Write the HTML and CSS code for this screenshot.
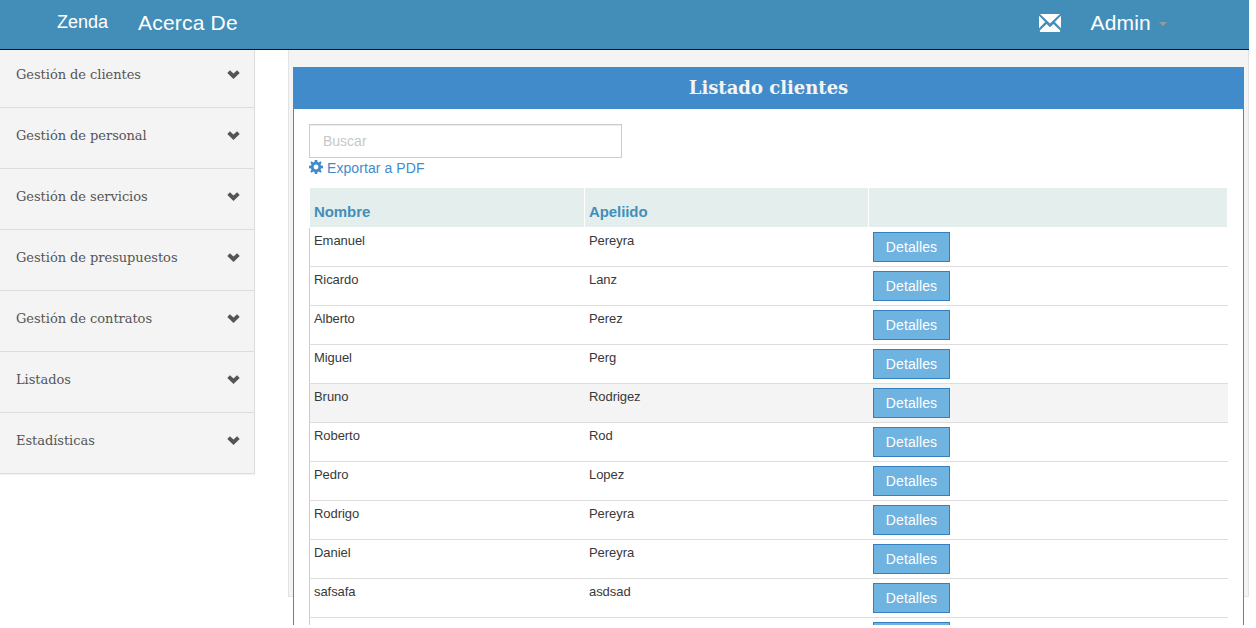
FILE: index.html
```
<!DOCTYPE html>
<html lang="es">
<head>
<meta charset="utf-8">
<title>Listado clientes</title>
<link rel="stylesheet" href="styles.css">
</head>
<body>
<svg class="defs" aria-hidden="true">
  <symbol id="chevron" viewBox="0 0 13 9"><path d="M0.300 3 2.900 0.300 6.500 3.500 10.100 0.300 12.700 3 6.500 9z"/></symbol>
</svg>
<div class="app">
  <header class="navbar">
    <a class="brand">Zenda</a>
    <a class="about">Acerca De</a>
    <svg class="mail" viewBox="0 0 22 18"><path d="M1 0H21L11 9.4zM0 1.800 6.200 8.100 0 14.200zM22 1.800V14.200L15.800 8.100zM1 18 0.800 16.600 7.600 9.900 11 13.200 14.400 9.900 21.200 16.600 21 18z"/></svg>
    <a class="user">Admin</a>
    <span class="caret"></span>
  </header>
  <div class="body">
    <nav class="sidebar">
      <a class="item">Gestión de clientes<svg class="chev"><use href="#chevron"/></svg></a>
      <a class="item">Gestión de personal<svg class="chev"><use href="#chevron"/></svg></a>
      <a class="item">Gestión de servicios<svg class="chev"><use href="#chevron"/></svg></a>
      <a class="item">Gestión de presupuestos<svg class="chev"><use href="#chevron"/></svg></a>
      <a class="item">Gestión de contratos<svg class="chev"><use href="#chevron"/></svg></a>
      <a class="item">Listados<svg class="chev"><use href="#chevron"/></svg></a>
      <a class="item">Estadísticas<svg class="chev"><use href="#chevron"/></svg></a>
    </nav>
    <main class="well">
      <section class="panel">
        <h1 class="panel-title">Listado clientes</h1>
        <div class="panel-body">
          <input class="search" type="text" placeholder="Buscar">
          <a class="export"><svg class="cog" viewBox="0 0 14 14"><path fill-rule="evenodd" d="M5.8 0h2.4l.4 2 1.1.5L11.4 1.300 12.700 2.600 11.500 4.300 12 5.400 14 5.800V8.200L12 8.600 11.500 9.700 12.700 11.400 11.400 12.700 9.700 11.500 8.600 12 8.200 14H5.800L5.400 12 4.300 11.500 2.600 12.700 1.300 11.400 2.500 9.700 2 8.600 0 8.200V5.800L2 5.400 2.500 4.300 1.300 2.600 2.600 1.300 4.300 2.500 5.400 2zM7 4.600A2.400 2.400 0 1 0 7 9.400 2.400 2.400 0 1 0 7 4.600z"/></svg>Exportar a PDF</a>
          <div class="table">
            <div class="head"><span>Nombre</span><span>Apeliido</span><span></span></div>
            <div class="row"><span>Emanuel</span><span>Pereyra</span><button class="btn">Detalles</button></div>
            <div class="row"><span>Ricardo</span><span>Lanz</span><button class="btn">Detalles</button></div>
            <div class="row"><span>Alberto</span><span>Perez</span><button class="btn">Detalles</button></div>
            <div class="row"><span>Miguel</span><span>Perg</span><button class="btn">Detalles</button></div>
            <div class="row active"><span>Bruno</span><span>Rodrigez</span><button class="btn">Detalles</button></div>
            <div class="row"><span>Roberto</span><span>Rod</span><button class="btn">Detalles</button></div>
            <div class="row"><span>Pedro</span><span>Lopez</span><button class="btn">Detalles</button></div>
            <div class="row"><span>Rodrigo</span><span>Pereyra</span><button class="btn">Detalles</button></div>
            <div class="row"><span>Daniel</span><span>Pereyra</span><button class="btn">Detalles</button></div>
            <div class="row"><span>safsafa</span><span>asdsad</span><button class="btn">Detalles</button></div>
            <div class="row"><span></span><span></span><button class="btn" aria-label="Detalles"></button></div>
          </div>
        </div>
      </section>
    </main>
  </div>
</div>
</body>
</html>
```
FILE: styles.css
```
* { box-sizing: border-box; }
body { margin: 0; background: #fff; font-family: "Liberation Sans", Arial, sans-serif; overflow: hidden; }
.defs { display: none; }
.app { width: 1249px; height: 625px; overflow: hidden; }
.navbar { display: flex; align-items: flex-start; height: 50px; background: #438eb9; border-bottom: 1px solid #111; color: #fff; padding: 0 82px 0 57px; }
.brand { font-size: 18px; line-height: 20px; padding-top: 12px; width: 81px; }
.about, .user { font-size: 21px; line-height: 24px; padding-top: 11px; letter-spacing: .2px; }
.mail { width: 22px; height: 18px; margin: 13.5px 29.500px 0 auto; fill: #fff; }
.caret { border: 4px solid transparent; border-top-color: #999; border-bottom: 0; margin: 22px 0 0 8px; }
.body { display: flex; align-items: flex-start; gap: 33px; }
.sidebar { width: 255px; margin-top: -3px; border-right: 1px solid #ddd; box-shadow: 0 1px 1px rgba(0,0,0,.05); clip-path: inset(3px -2px -3px 0); }
.item { display: flex; justify-content: space-between; align-items: flex-start; height: 61px; padding: 19px 14.500px 0 16px; background: #f4f4f4; border-bottom: 1px solid #ddd; font: 13px/17px "DejaVu Serif", serif; letter-spacing: -.05px; color: #555; }
.chev { width: 13px; height: 9px; margin-top: 4px; fill: #555; }
.well { width: 961px; height: 547px; padding: 17px 4px 0; background: #f4f4f4; border: 1px solid #e3e3e3; border-top: 0; }
.panel { width: 951px; height: 700px; background: #fff; border: 1px solid #428bca; }
.panel-title { margin: 0; height: 41px; background: #428bca; color: #f4f4f4; text-align: center; font: bold 18px/39px "DejaVu Serif", serif; }
.panel-body { padding: 15px; }
.search { display: block; width: 313px; height: 34px; padding: 6px 13px; border: 1px solid #ccc; box-shadow: inset 0 1px 1px rgba(0,0,0,.075); font: 14px/20px "Liberation Sans", Arial, sans-serif; outline: 0; }
.search::placeholder { color: #c8c8c8; opacity: 1; }
.export { display: flex; gap: 4px; height: 30px; font-size: 14px; line-height: 20px; color: #428bca; letter-spacing: .08px; }
.cog { width: 14px; height: 14px; margin-top: 2px; fill: #428bca; }
.table { width: 919px; font-size: 13px; color: #393939; }
.head, .row { display: grid; grid-template-columns: 275px 284px 359px; }
.head { height: 40px; padding: 0 0 1px 1px; font-size: 15px; font-weight: bold; color: #438eb9; letter-spacing: -.08px; }
.head span { height: 39px; padding: 15px 4px 0; line-height: 18px; background: #e4eeed; border-right: 1px solid #fff; }
.row { height: 39px; border-left: 1px solid #ccc; border-bottom: 1px solid #ddd; align-items: start; }
.row span { padding: 5px 4px 0; line-height: 16px; letter-spacing: -.06px; }
.active { background: #f4f4f4; }
.btn { width: 77px; height: 30px; margin: 4px 0 0 4px; padding: 0; background: #6fb3e0; border: 1px solid #337fc0; color: #fff; font: 14px/20px "Liberation Sans", Arial, sans-serif; letter-spacing: .1px; }
```
